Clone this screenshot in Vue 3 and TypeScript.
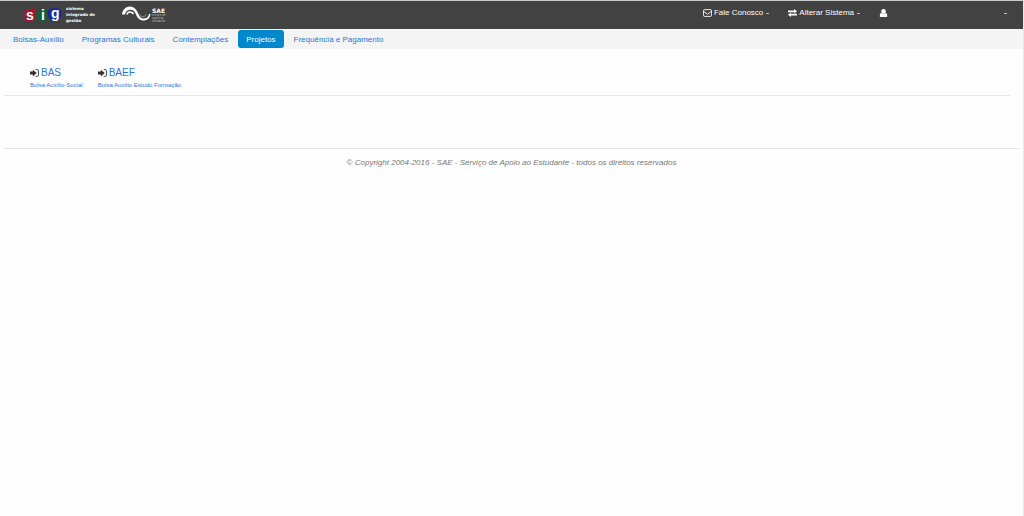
<script setup lang="ts">
interface Tab {
  label: string
  active?: boolean
}

interface Project {
  code: string
  name: string
}

const tabs: Tab[] = [
  { label: 'Bolsas-Auxílio' },
  { label: 'Programas Culturais' },
  { label: 'Contemplações' },
  { label: 'Projetos', active: true },
  { label: 'Frequência e Pagamento' },
]

const projects: Project[] = [
  { code: 'BAS', name: 'Bolsa Auxílio-Social' },
  { code: 'BAEF', name: 'Bolsa Auxílio Estudo Formação' },
]
</script>

<template>
  <div class="page">
    <header class="topbar">
      <a class="brand sig" href="#">
        <svg class="sig-mark" viewBox="0 0 38 16" aria-hidden="true">
          <path d="M0 4 9 1l4 3v6l-5 4-7 1z" fill="#a0182f" />
          <path d="m12 5 5-3 7 1 2 7-5 5-6-1-4-5z" fill="#195a38" />
          <path d="m23 4 9-4 5 3 1 6-7 6-6-3z" fill="#182a9c" />
          <text x="2" y="13" class="sig-letter">s</text>
          <text x="17" y="13" class="sig-letter">i</text>
          <text x="27" y="11" class="sig-letter">g</text>
        </svg>
        <span class="sig-text">sistema<br />integrado de<br />gestão</span>
      </a>
      <a class="brand sae" href="#">
        <svg class="sae-mark" viewBox="0 0 29 16" aria-hidden="true">
          <path d="M0 8.500C.500 3.500 4 .500 8 .500c4 0 6.500 3 8 6.500 1.300 3.500 2.500 5.500 5.500 5.500 3 0 5-1.500 5.500-4.500h1.500c-.500 4-3 6.500-7 6.500-4 0-6-2.500-7.500-6C12.500 5 11 3.800 8.500 3.800 5.500 3.800 3.500 5.500 3 8.500z" fill="#fff" />
          <path d="M5 8.500c.500-3 4.500-3.500 6.500-.500" fill="none" stroke="#fff" stroke-width="1.600" />
          <path d="M17.500 8.500c1.500 3 5.500 3 6.500 0" fill="none" stroke="#aaa" stroke-width=".800" />
        </svg>
        <span class="sae-text"><strong>SAE</strong><small>serviço de<br />apoio ao<br />estudante</small></span>
      </a>
      <nav class="tools" aria-label="Conta">
        <button type="button" class="tool">
          <svg class="icon" viewBox="0 0 16 14" aria-hidden="true">
            <rect x="1" y="1" width="14" height="12" rx="1.500" fill="none" stroke="#fff" stroke-width="1.600" />
            <path d="m1 4 7 5 7-5" fill="none" stroke="#fff" stroke-width="1.600" />
          </svg>
          Fale Conosco <i class="caret"></i>
        </button>
        <button type="button" class="tool">
          <svg class="icon" viewBox="0 0 16 14" aria-hidden="true">
            <path d="M0 10l5-4v2.500h11v3H5V14zM16 4l-5 4V5.500H0v-3h11V0z" fill="#fff" />
          </svg>
          Alterar Sistema <i class="caret"></i>
        </button>
        <button type="button" class="tool user" aria-label="Usuário">
          <svg class="icon" viewBox="0 0 16 14" aria-hidden="true">
            <circle cx="8" cy="4" r="4" fill="#fff" />
            <path d="M1.500 14V11c0-2.500 1.200-4.200 3.300-4.500 1.800 2 4.600 2 6.400 0 2.100.300 3.300 2 3.300 4.500v3z" fill="#fff" />
          </svg>
          <i class="caret"></i>
        </button>
      </nav>
    </header>

    <nav class="tabs" aria-label="Principal">
      <a v-for="tab in tabs" :key="tab.label" href="#" class="tab" :class="{ active: tab.active }">{{ tab.label }}</a>
    </nav>

    <main class="projects">
      <a v-for="project in projects" :key="project.code" href="#" class="project">
        <span class="code">
          <svg class="enter" viewBox="0 0 16 14" aria-hidden="true">
            <path d="M0 4.500h5V1l7 6-7 6V9.500H0z" fill="#333" />
            <path d="M10 1h3q2 0 2 2v8q0 2-2 2h-3" fill="none" stroke="#333" stroke-width="1.600" />
          </svg>
          {{ project.code }}
        </span>
        <span class="name">{{ project.name }}</span>
      </a>
    </main>

    <footer class="footer">© Copyright 2004-2016 - SAE - Serviço de Apoio ao Estudante - todos os direitos reservados</footer>
  </div>
</template>

<style>
body {
  margin: 0;
  background: #fefefe;
}
</style>

<style scoped>
.page {
  box-sizing: border-box;
  min-height: 100vh;
  border-top: 1px solid #c9cccb;
  border-right: 1px solid #e9e9e9;
  font-family: "Liberation Sans", Arial, sans-serif;
  font-size: 8px;
}

a {
  color: #1e78e0;
  text-decoration: none;
}

.topbar {
  display: flex;
  align-items: flex-start;
  height: 28px;
  padding-left: 24px;
  background: #424242;
}

.brand {
  display: flex;
  color: #fff;
}

.sig {
  width: 98px;
  gap: 4px;
  padding-top: 5px;
}

.sig-mark {
  width: 38px;
  height: 16px;
  margin-top: 1px;
  overflow: visible;
}

.sig-letter {
  fill: #fff;
  font: bold 14px "Liberation Sans", Arial, sans-serif;
}

.sig-text {
  font: bold 4px/6px "DejaVu Sans", sans-serif;
  white-space: nowrap;
}

.sae {
  gap: 1px;
  padding-top: 5px;
}

.sae-mark {
  width: 29px;
  height: 16px;
}

.sae-text {
  display: flex;
  flex-direction: column;
  padding-top: 2px;
}

.sae-text strong {
  font: bold 6px/6px "DejaVu Sans", sans-serif;
}

.sae-text small {
  color: #bbb;
  font-size: 3px;
  line-height: 3px;
}

.tools {
  display: flex;
  gap: 19px;
  margin-left: auto;
  padding: 6px 16px 0 0;
}

.tool {
  display: flex;
  align-items: center;
  gap: 2px;
  height: 12px;
  padding: 0;
  border: 0;
  background: none;
  color: #fff;
  font: 8px/12px "Liberation Sans", Arial, sans-serif;
  white-space: nowrap;
}

.icon {
  width: 9px;
  height: 8px;
}

.caret {
  width: 3px;
  height: 1px;
  margin: 1px 0 0 1px;
  background: #bbb;
}

.user {
  justify-content: space-between;
  width: 128px;
}

.tabs {
  display: flex;
  align-items: center;
  gap: 2px;
  height: 20px;
  padding-left: 5px;
  background: #f4f4f4;
}

.tab {
  padding: 1px 8px 0;
  border-radius: 3px;
  line-height: 17px;
  white-space: nowrap;
}

.tab.active {
  background: #0088cc;
  color: #fff;
}

.projects {
  display: flex;
  gap: 15px;
  height: 28px;
  margin: 0 13px 0 4px;
  padding: 18px 26px 0;
  border-bottom: 1px solid #e6e6e6;
}

.project {
  display: flex;
  flex-direction: column;
}

.code {
  display: flex;
  align-items: center;
  gap: 2px;
  font-size: 10px;
  line-height: 12px;
}

.enter {
  width: 9px;
  height: 8px;
}

.name {
  font-size: 6px;
  line-height: 12px;
  white-space: nowrap;
}

.footer {
  margin: 52px 4px 0;
  padding-top: 8px;
  border-top: 1px solid #e6e6e6;
  color: #777;
  font-size: 8px;
  font-style: italic;
  line-height: 12px;
  text-align: center;
}
</style>
